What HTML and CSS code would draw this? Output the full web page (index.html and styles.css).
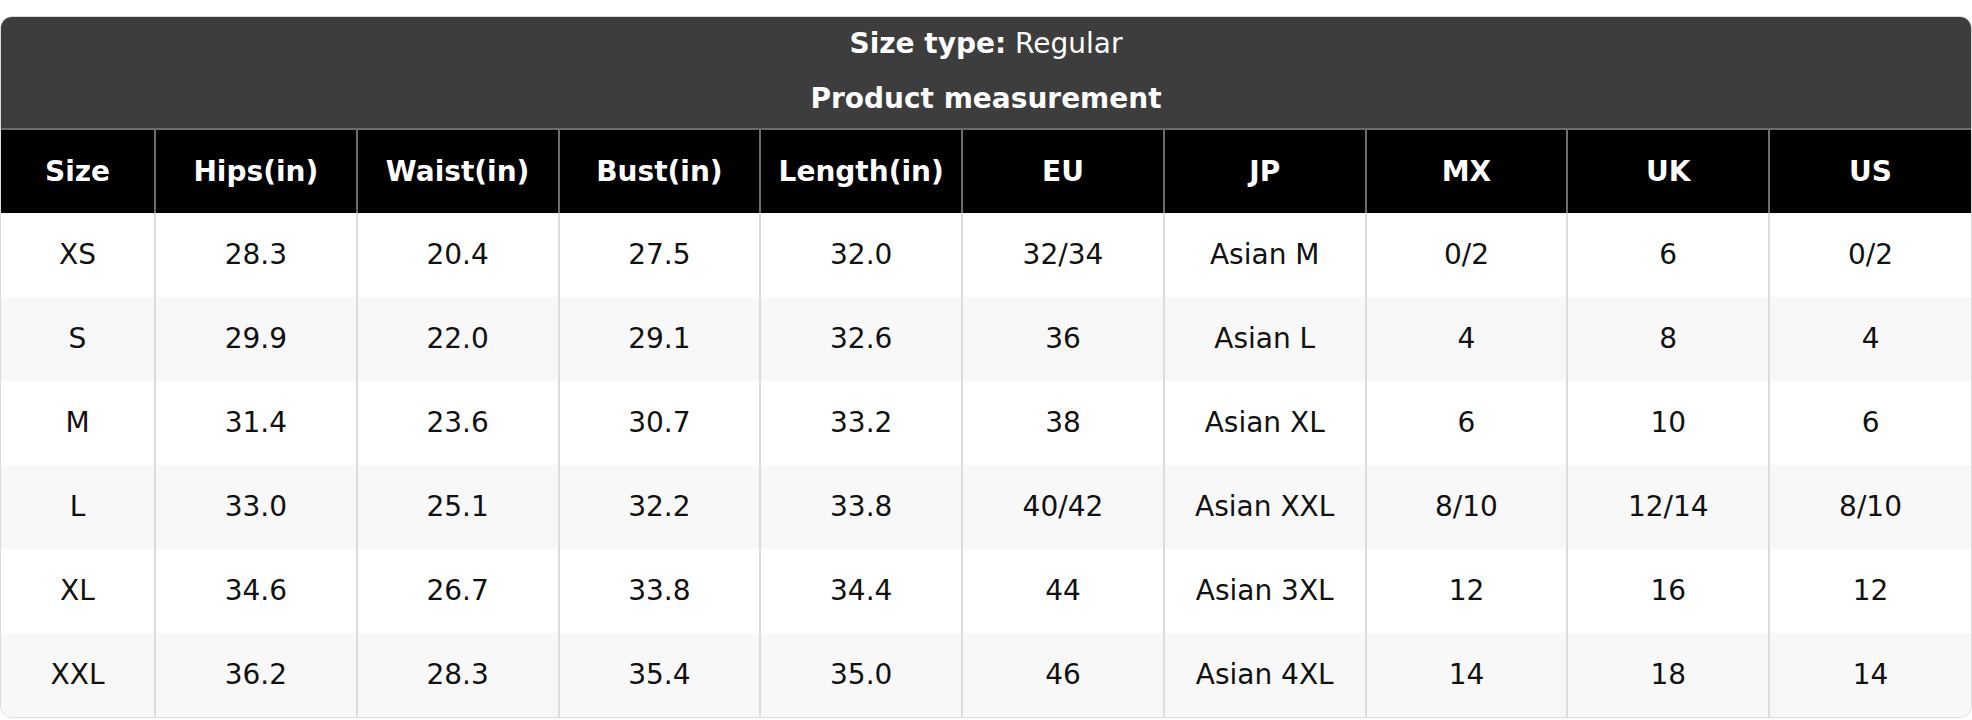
FILE: index.html
```html
<!DOCTYPE html>
<html>
<head>
<meta charset="utf-8">
<link rel="stylesheet" href="styles.css">
</head>
<body>
<div class="chart">
  <div class="chart-head">
    <div class="head-line"><b>Size type:</b> Regular</div>
    <div class="head-line"><b>Product measurement</b></div>
  </div>
  <table class="sizes">
    <colgroup>
      <col class="col-size">
      <col><col><col><col><col><col><col><col><col>
    </colgroup>
    <thead>
      <tr><th>Size</th><th>Hips(in)</th><th>Waist(in)</th><th>Bust(in)</th><th>Length(in)</th><th>EU</th><th>JP</th><th>MX</th><th>UK</th><th>US</th></tr>
    </thead>
    <tbody>
      <tr><td>XS</td><td>28.3</td><td>20.4</td><td>27.5</td><td>32.0</td><td>32/34</td><td>Asian M</td><td>0/2</td><td>6</td><td>0/2</td></tr>
      <tr><td>S</td><td>29.9</td><td>22.0</td><td>29.1</td><td>32.6</td><td>36</td><td>Asian L</td><td>4</td><td>8</td><td>4</td></tr>
      <tr><td>M</td><td>31.4</td><td>23.6</td><td>30.7</td><td>33.2</td><td>38</td><td>Asian XL</td><td>6</td><td>10</td><td>6</td></tr>
      <tr><td>L</td><td>33.0</td><td>25.1</td><td>32.2</td><td>33.8</td><td>40/42</td><td>Asian XXL</td><td>8/10</td><td>12/14</td><td>8/10</td></tr>
      <tr><td>XL</td><td>34.6</td><td>26.7</td><td>33.8</td><td>34.4</td><td>44</td><td>Asian 3XL</td><td>12</td><td>16</td><td>12</td></tr>
      <tr><td>XXL</td><td>36.2</td><td>28.3</td><td>35.4</td><td>35.0</td><td>46</td><td>Asian 4XL</td><td>14</td><td>18</td><td>14</td></tr>
    </tbody>
  </table>
</div>
</body>
</html>
```
FILE: styles.css
```css
html, body {
  margin: 0;
  padding: 0;
  background: #fff;
}
body {
  font-family: "DejaVu Sans", Verdana, sans-serif;
  font-size: 28px;
  color: #111;
}
.chart {
  margin-top: 16px;
  border: 1px solid #dcdcdc;
  border-radius: 12px;
  overflow: hidden;
  box-sizing: border-box;
  width: 1972px;
}
.chart-head {
  background: #3d3d3d;
  color: #fff;
  text-align: center;
  padding: 6px 0 8px;
  display: flex;
  flex-direction: column;
  gap: 13px;
}
.head-line {
  line-height: 42px;
}
.head-line b {
  font-weight: bold;
}
.sizes {
  width: 100%;
  table-layout: fixed;
  border-collapse: collapse;
}
.col-size {
  width: 154px;
}
.sizes th,
.sizes td {
  text-align: center;
  height: 84px;
  padding: 0;
  line-height: 42px;
  box-sizing: border-box;
}
.sizes th {
  background: #000;
  color: #fff;
  font-weight: bold;
  border-top: 2px solid #6b6b6b;
  border-left: 2px solid #6b6b6b;
}
.sizes td {
  border-left: 2px solid #dcdcdc;
}
.sizes th:first-child,
.sizes td:first-child {
  border-left: none;
}
.sizes tbody tr:nth-child(odd) td {
  background: #fff;
}
.sizes tbody tr:nth-child(even) td {
  background: #f8f8f8;
}
```
